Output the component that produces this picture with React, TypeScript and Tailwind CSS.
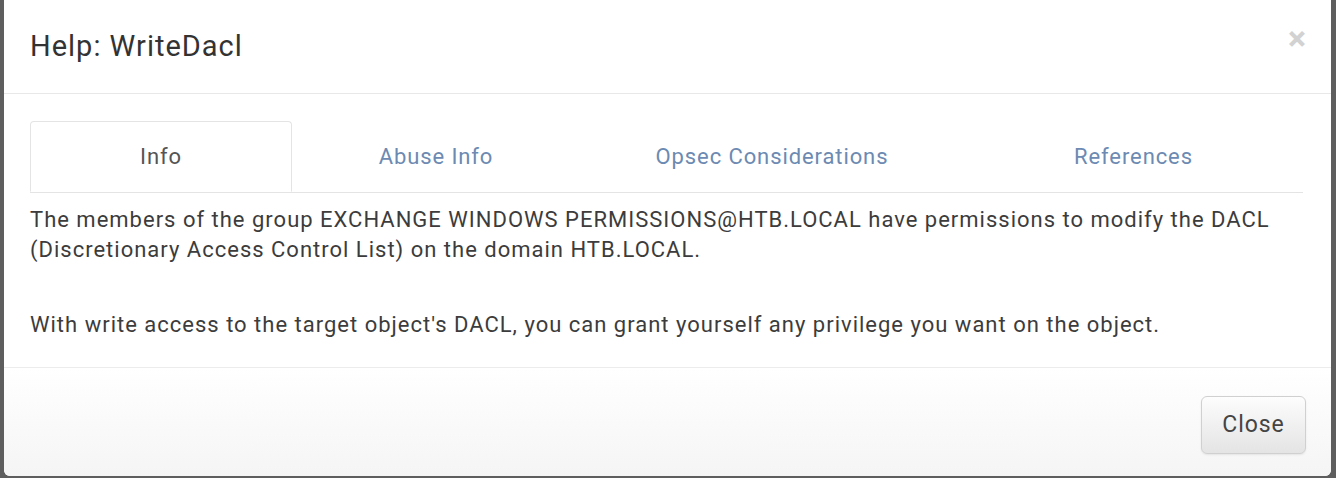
const tabs = [
  { label: "Info", width: "w-[262px]" },
  { label: "Abuse Info", width: "w-[288px]" },
  { label: "Opsec Considerations", width: "w-[384px]" },
  { label: "References", width: "flex-1" },
];

export default function App() {
  const active = "Info";

  return (
    <div
      className="h-[478px] w-[1336px] overflow-hidden bg-[#5e5e5e] pl-[4px] pr-[5px]"
      style={{ fontFamily: "Roboto, 'Liberation Sans', sans-serif" }}
    >
      <div className="flex h-[476px] flex-col rounded-b-[6px] bg-white">
        {/* header */}
        <div className="flex h-[94px] shrink-0 items-center justify-between border-b border-[#e8e8e8] pl-[26px] pr-[25px]">
          <h4 className="text-[29px] leading-none tracking-[1px] text-[#333]">Help: WriteDacl</h4>
          <button className="-mt-[18px] text-[34px] font-bold leading-none text-[#d2d2d2]">
            ×
          </button>
        </div>

        {/* body */}
        <div className="flex-1 pl-[26px] pr-[28px] pt-[27px]">
          <ul className="flex border-b border-[#e4e4e4] tracking-[0.9px]">
            {tabs.map((t) =>
              t.label === active ? (
                <li
                  key={t.label}
                  className={`${t.width} -mb-px flex h-[71px] items-center justify-center rounded-t-[4px] border border-b-white border-[#e4e4e4] bg-white text-[22px] text-[#555]`}
                >
                  {t.label}
                </li>
              ) : (
                <li
                  key={t.label}
                  className={`${t.width} flex h-[71px] items-center justify-center text-[22px] text-[#6c8ab2]`}
                >
                  {t.label}
                </li>
              )
            )}
          </ul>
          <div className="pt-[12px] text-[22px] leading-[30px] tracking-[1px] text-[#3c3c3c]">
            <p>
              The members of the group EXCHANGE WINDOWS PERMISSIONS@HTB.LOCAL have permissions to modify the DACL
              (Discretionary Access Control List) on the domain HTB.LOCAL.
            </p>
            <p className="mt-[45px]">
              With write access to the target object's DACL, you can grant yourself any privilege you want on the
              object.
            </p>
          </div>
        </div>

        {/* footer */}
        <div className="flex h-[109px] shrink-0 items-start justify-end rounded-b-[6px] border-t border-[#ececec] bg-gradient-to-b from-white to-[#f5f5f5] pr-[25px] pt-[28px]">
          <button className="h-[58px] w-[105px] rounded-[6px] border border-[#d0d0d0] bg-gradient-to-b from-[#fdfdfd] to-[#e4e4e4] text-[23px] tracking-[0.04em] text-[#444] shadow-[0_1px_2px_rgba(0,0,0,0.08)]">
            Close
          </button>
        </div>
      </div>
    </div>
  );
}
